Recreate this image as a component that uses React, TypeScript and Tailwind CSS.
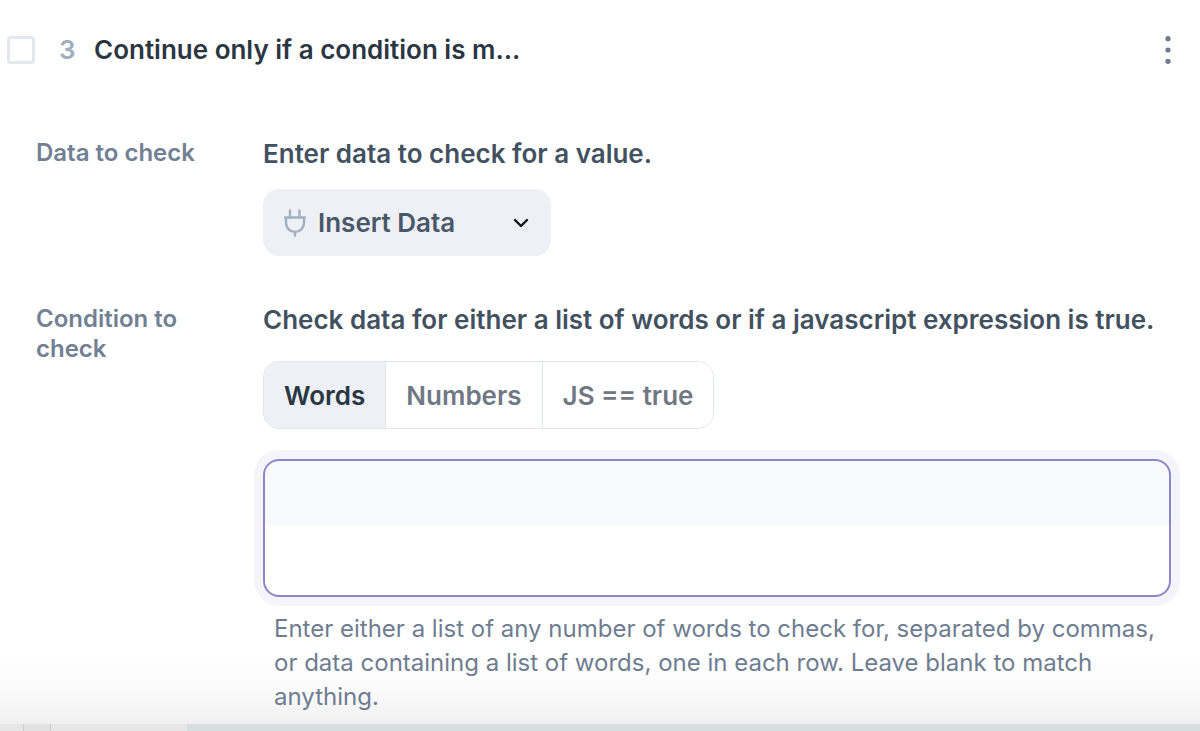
import React, { useState } from 'react';
import clsx from 'clsx';

const MODES = ['Words', 'Numbers', 'JS == true'];

const PlugIcon: React.FC = () => (
  <svg width="22" height="28" viewBox="0 0 22 28" fill="none" stroke="#a0b0c1" strokeWidth="2.4" strokeLinecap="round" aria-hidden="true">
    <path d="M6 1.5v6M15.5 1.5v6M1.2 8.5h19.6M2 8.5v5.5a9 9 0 0 0 18 0v-5.5M11 23v3.5" />
  </svg>
);

const ChevronIcon: React.FC = () => (
  <svg width="16" height="10" viewBox="0 0 16 10" fill="none" stroke="#0f1317" strokeWidth="2.4" strokeLinecap="round" strokeLinejoin="round" aria-hidden="true">
    <path d="M2 2l6 6 6-6" />
  </svg>
);

const DotsIcon: React.FC = () => (
  <svg width="6" height="28" viewBox="0 0 6 28" fill="#6b7c92" aria-hidden="true">
    <circle cx="3" cy="2.7" r="2.6" />
    <circle cx="3" cy="14" r="2.6" />
    <circle cx="3" cy="25.3" r="2.6" />
  </svg>
);

interface FieldRowProps {
  label: string;
  htmlFor: string;
  title: string;
  children: React.ReactNode;
}

const FieldRow: React.FC<FieldRowProps> = ({ label, htmlFor, title, children }) => (
  <div className="flex">
    <label htmlFor={htmlFor} className="w-[227px] shrink-0 pr-8 text-[24px] leading-[30px] font-semibold text-[#718093]">
      {label}
    </label>
    <div className="min-w-0 flex-1">
      <h3 className="text-[26px] leading-8 font-semibold text-[#425160]">{title}</h3>
      {children}
    </div>
  </div>
);

export default function App() {
  const [mode, setMode] = useState('Words');
  const [value, setValue] = useState('');

  return (
    <div className="bg-white font-['Inter',sans-serif]">
      <main className="bg-[linear-gradient(to_top,#f0f0f0,#fafafa_30px,#ffffff_70px)] pb-2.5">
        <header className="flex items-center pt-[30px] pr-[29px] pl-[7px]">
          <input
            type="checkbox"
            aria-label="Select step 3"
            className="size-7 appearance-none rounded-sm border-3 border-[#e2e8f0] bg-white checked:bg-[#8a80c4]"
          />
          <span className="ml-6 w-[35px] text-[26px] leading-10 font-semibold text-[#a0aec0]">3</span>
          <h2 className="text-[26px] leading-10 font-semibold text-[#2a3642]">Continue only if a condition is m...</h2>
          <button type="button" aria-label="Step options" className="ml-auto cursor-pointer">
            <DotsIcon />
          </button>
        </header>

        <div className="mt-[68px] flex flex-col gap-12 pr-[29px] pl-9">
          <FieldRow label="Data to check" htmlFor="insert-data" title="Enter data to check for a value.">
            <button
              id="insert-data"
              type="button"
              className="mt-[19px] flex h-[67px] w-72 cursor-pointer items-center rounded-2xl bg-[#edf0f5] pr-[22px] pl-[21px] text-[26px] font-semibold text-[#4a5768]"
            >
              <PlugIcon />
              <span className="ml-3">Insert Data</span>
              <span className="ml-auto">
                <ChevronIcon />
              </span>
            </button>
          </FieldRow>

          <FieldRow
            label="Condition to check"
            htmlFor="condition"
            title="Check data for either a list of words or if a javascript expression is true."
          >
            <div className="mt-[25px] flex h-[68px] w-fit overflow-hidden rounded-2xl border border-[#dfe5ed] divide-x divide-[#dfe5ed]">
              {MODES.map(m => (
                <button
                  key={m}
                  type="button"
                  aria-pressed={m === mode}
                  onClick={() => setMode(m)}
                  className={clsx(
                    'cursor-pointer px-5 text-[26px] font-semibold',
                    m === mode ? 'bg-[#edf0f5] text-[#2a3642]' : 'bg-white text-[#6f7883]'
                  )}
                >
                  {m}
                </button>
              ))}
            </div>
            <textarea
              id="condition"
              value={value}
              onChange={e => setValue(e.target.value)}
              className="mt-[30px] block h-[138px] w-full resize-none rounded-2xl border-2 border-[#8f86c8] bg-[linear-gradient(#f8f9fd_64px,#ffffff_64px)] px-3 py-4 text-[24px] leading-8 text-[#425160] ring-[9px] ring-[#f5f4fa] outline-none"
            />
            <p className="mt-[15px] pr-2 pl-[11px] text-[24px] leading-[34px] text-[#6e7d90]">
              Enter either a list of any number of words to check for, separated by commas, or data containing a list of words, one in each row. Leave blank to match anything.
            </p>
          </FieldRow>
        </div>
      </main>

      <footer className="flex h-[7px] bg-[#d8dde0]">
        <div className="w-6 border-r border-[#cccccc] bg-[#e6e6e6]" />
        <div className="w-[27px] border-r border-[#cccccc] bg-[#e2e2e2]" />
        <div className="w-[136px] bg-[#e6e6e6]" />
      </footer>
    </div>
  );
}
